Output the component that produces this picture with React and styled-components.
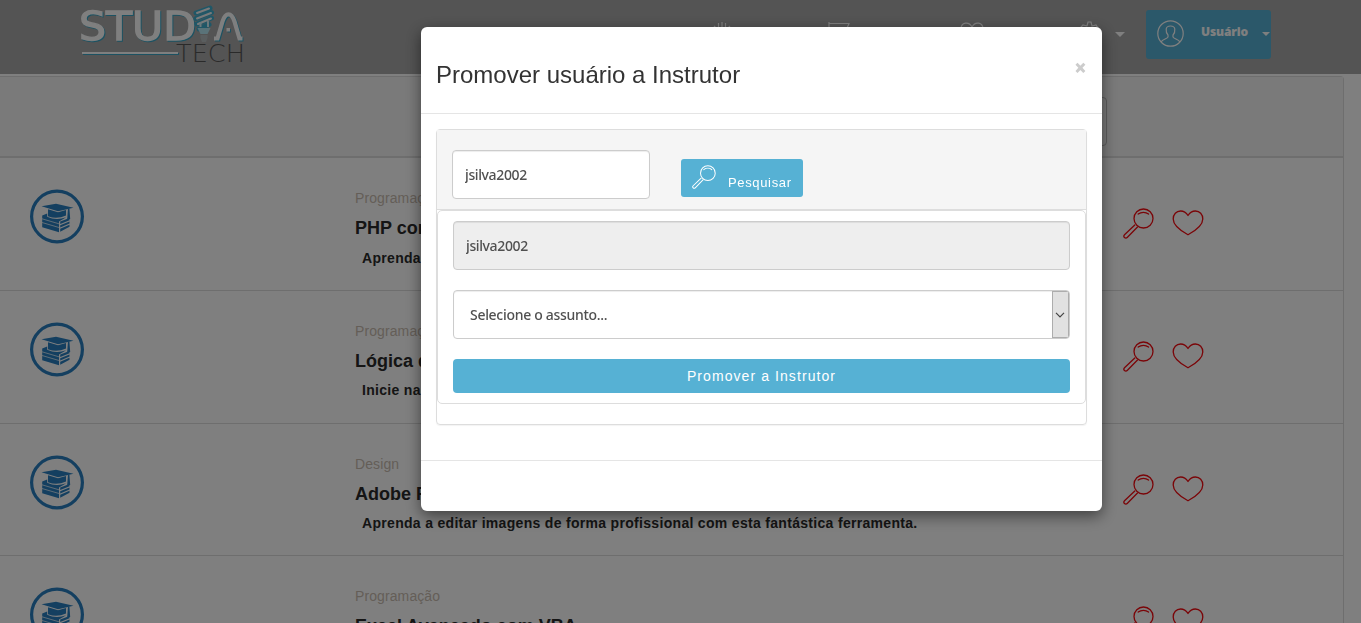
import React from "react";
import styled, { createGlobalStyle } from "styled-components";

const GlobalStyle = createGlobalStyle`
  *, *::before, *::after { box-sizing: border-box; }
  html, body { margin: 0; height: 100%; overflow: hidden; }
  body { background: #fff; color: #333; font: 14px/20px "Liberation Sans", sans-serif; }
  svg { display: block; }
  button, input { font-family: inherit; margin: 0; }
`;

const Page = styled.div`
  height: 100vh;
  overflow: hidden;
`;

const TopBar = styled.header`
  display: flex;
  height: 74px;
  padding: 0 90px 0 76px;
  background: #a8a8a8;
`;

const Brand = styled.a`
  width: 172px;
  height: 70px;
  flex: none;
`;

const Wordmark = styled.g`
  filter: drop-shadow(1.3px 1.8px 0 #38a5c5);
`;

const Nav = styled.nav`
  display: flex;
  flex: 1;
  justify-content: flex-end;
  align-items: flex-start;
`;

const NavItem = styled.a`
  display: flex;
  justify-content: center;
  width: ${(p) => p.$width}px;
  padding-top: 21px;
`;

const Caret = styled.div`
  width: 0;
  height: 0;
  flex: none;
  border: ${(p) => p.$size}px solid transparent;
  border-top-color: #fff;
  border-bottom: 0;
`;

const CaretSlot = styled.div`
  width: 10px;
  margin-right: 21px;
  padding-top: 32px;
`;

const UserButton = styled.button`
  display: flex;
  align-items: flex-start;
  width: 125px;
  height: 49px;
  margin-top: 10px;
  padding: 10px 1px 0 11px;
  border: 0;
  border-radius: 3px;
  background: #56b1d4;
  color: #fff;
`;

const UserName = styled.span`
  width: 61px;
  margin-left: 17px;
  padding-top: 2px;
  text-align: left;
  font: 800 12px/20px "Open Sans", sans-serif;
  letter-spacing: -0.15px;
`;

const UserCaret = styled.span`
  padding-top: 12px;
`;

const Catalog = styled.main`
  width: 1344px;
  margin-top: 2px;
  border: 1px solid #ddd;
  border-left: 0;
  border-radius: 0 4px 4px 0;
`;

const Filters = styled.div`
  display: flex;
  justify-content: flex-end;
  height: 81.2px;
  padding: 20px 236px 0 0;
  background: #f5f5f5;
  border-bottom: 2px solid #ddd;
`;

const FilterInput = styled.input`
  width: 360px;
  height: 49px;
  border: 1px solid #bbb;
  border-radius: 4px;
  background: #f5f5f5;
`;

const Course = styled.article`
  display: flex;
  height: 132.67px;
  border-bottom: 1px solid #ddd;
`;

const CourseBadge = styled.div`
  width: 355px;
  padding: 31px 0 0 29px;
`;

const CourseInfo = styled.div`
  width: 768px;
  padding-top: 30px;
`;

const Category = styled.div`
  color: #c9bcb0;
  letter-spacing: 0.1px;
`;

const CourseTitle = styled.h3`
  margin: 9px 0 8.6px;
  color: #2a2a2a;
  font-size: 18px;
  line-height: 22px;
`;

const Summary = styled.p`
  margin: 0;
  padding-left: 7px;
  color: #2a2a2a;
  font-weight: bold;
  letter-spacing: 0.31px;
`;

const Actions = styled.div`
  display: flex;
  gap: 18px;
  padding-top: 50.3px;
  color: #f50a10;
`;

const Backdrop = styled.div`
  position: fixed;
  inset: 0;
  background: rgba(0, 0, 0, 0.5);
`;

const Dialog = styled.section`
  position: fixed;
  top: 27px;
  left: 421px;
  width: 681px;
  height: 484px;
  background: #fff;
  border-radius: 6px;
  box-shadow: 0 5px 15px rgba(0, 0, 0, 0.5);
`;

const DialogHeader = styled.div`
  display: flex;
  justify-content: space-between;
  height: 87px;
  padding: 33px 15px 0;
  border-bottom: 1px solid #e5e5e5;
`;

const DialogTitle = styled.h2`
  margin: 0;
  font-size: 24px;
  line-height: 30px;
  font-weight: normal;
`;

const CloseButton = styled.button`
  height: 14px;
  padding: 0;
  border: 0;
  background: none;
  color: #ccc;
  font: 800 22px/11px "Open Sans", sans-serif;
`;

const DialogBody = styled.div`
  height: 347px;
  padding: 15px 15px 0;
  border-bottom: 1px solid #e5e5e5;
`;

const SearchPanel = styled.div`
  height: 296px;
  border: 1px solid #ddd;
  border-radius: 4px;
  box-shadow: 0 1px 1px rgba(0, 0, 0, 0.05);
`;

const SearchBar = styled.div`
  display: flex;
  gap: 31px;
  height: 80px;
  padding: 20px 15px 0;
  background: #f5f5f5;
  border-bottom: 1px solid #ddd;
`;

const ResultPanel = styled.div`
  display: flex;
  flex-direction: column;
  gap: 20px;
  height: 194px;
  padding: 10px 15px 0;
  border: 1px solid #ddd;
  border-radius: 5px;
`;

const Field = styled.input`
  width: ${(p) => p.$width || "100%"};
  height: 49px;
  flex: none;
  padding: 0 12px;
  border: 1px solid #ccc;
  border-radius: 4px;
  background: ${(p) => (p.readOnly ? "#eee" : "#fff")};
  box-shadow: inset 0 1px 1px rgba(0, 0, 0, 0.075);
  color: #505050;
  font: 500 14px "Noto Sans", sans-serif;
  letter-spacing: -0.38px;
  outline: 0;
`;

const SelectBox = styled.div`
  display: flex;
  justify-content: space-between;
  align-items: center;
  height: 49px;
  padding-left: 16px;
  overflow: hidden;
  border: 1px solid #ccc;
  border-radius: 4px;
  box-shadow: inset 0 1px 1px rgba(0, 0, 0, 0.075);
  color: #505050;
  font: 500 14px "Noto Sans", sans-serif;
  letter-spacing: -0.3px;
`;

const SelectArrow = styled.span`
  display: flex;
  align-items: center;
  justify-content: center;
  width: 17px;
  height: 47px;
  padding-right: 1px;
  border: 1px solid #adadad;
  background: #e1e1e1;
`;

const SearchButton = styled.button`
  display: flex;
  width: 122px;
  height: 38px;
  margin-top: 9px;
  padding: 6px 0 0 11px;
  border: 0;
  border-radius: 3px;
  background: #56b1d4;
  color: #fff;
`;

const SearchLabel = styled.span`
  margin-left: 12px;
  padding-top: 8px;
  font-size: 13px;
  line-height: 20px;
  letter-spacing: 0.65px;
`;

const PromoteButton = styled.button`
  height: 34px;
  padding: 0;
  border: 0;
  border-radius: 4px;
  background: #56b1d4;
  color: #fff;
  font-size: 14px;
  letter-spacing: 1.08px;
`;

const Logo = () => (
  <svg width="172" height="70" viewBox="76 0 172 70" fill="none">
    <Wordmark fill="#fff" stroke="#fff" strokeWidth="1.3" fontFamily="DejaVu Sans, sans-serif" fontSize="39">
      <text x="79" y="40" textLength="117" lengthAdjust="spacingAndGlyphs">STUD</text>
      <path d="M214 38.500h3.500l5-17c3-9.500 9-9.500 12 0l5 17h3" fill="none" strokeWidth="4.200" />
      <rect x="226.500" y="28" width="3.500" height="3.500" stroke="none" />
      <path d="M82 53H178" strokeWidth="2" />
    </Wordmark>
    <path d="M196 13l14-5M196 18.500l15.500-6M197 24l14.500-6M199 29l10-4.500" stroke="#3faecf" strokeWidth="5" strokeLinecap="round" />
    <path d="M197 13l12-4.500M197 18.500l14-5.500M198 24l13-5.500" stroke="#f4f4f4" strokeWidth="2" strokeLinecap="round" />
    <path d="M200.500 22v5M208 21v6" stroke="#d5f2fa" strokeWidth="2" />
    <path d="M197.500 28h13l-3 6h-7z" fill="#b5e6f3" />
    <path d="M200.500 35h7v3l-1.500 4h-4l-1.500-4z" fill="#b4bcbf" />
    <text x="176" y="61.500" textLength="69" lengthAdjust="spacingAndGlyphs" fill="#555"
      fontFamily="DejaVu Sans, sans-serif" fontWeight="200" fontSize="24">TECH</text>
  </svg>
);

const Magnifier = ({ size = 31 }) => (
  <svg width={size} height={size} viewBox="0 0 31 31" fill="none" stroke="currentColor" strokeWidth="1.300" strokeLinecap="round">
    <circle cx="20.500" cy="10.500" r="9.500" />
    <path d="M11.800 17L1.500 26.800a1.900 1.900 0 0 0 2.700 2.700L14.500 19M15.200 6c3-2.300 7.500-2.300 10.300 0" />
  </svg>
);

const Heart = () => (
  <svg width="32" height="31" viewBox="0 0 32 31" fill="none" stroke="currentColor" strokeWidth="1.300" strokeLinejoin="round">
    <path d="M16 7.500C14 4.300 11.500 3 8.600 3 4.300 3 1.200 6.500 1.200 11c0 6.500 7.500 11.800 14.800 15.800C23.300 22.800 30.800 17.500 30.800 11c0-4.500-3.100-8-7.400-8-2.900 0-5.400 1.300-7.400 4.500z" />
  </svg>
);

const CourseIcon = () => (
  <svg width="56" height="56" viewBox="0 0 56 56">
    <circle cx="28" cy="27.500" r="25.400" fill="none" stroke="#287fc0" strokeWidth="3.200" />
    <g fill="#287fc0">
      <path d="M12.500 17.300L27 14.800 44.500 18.800 29 22.200z" />
      <path d="M19 20.200l10 3 8-2.200v5.500q-9 4.200-18 .8zM39 19.500h1.400l.8 10.500h-3z" />
      <path d="M13.200 26.500l5-2v3.300q9 4.300 19 .5L30 32.500v10.800l-16.800-5z" />
      <path d="M31.200 32.500l9.300-3.500v2.200l-9.300 3.800zM31.200 36.300l9.300-3.800v2l-9.300 4zM31.200 39.800l9.300-4v2l-9.300 5z" />
    </g>
    <path d="M13 29.800l17 5M13 33.500l17 5" stroke="#fff" strokeWidth="0.700" />
  </svg>
);

const UserIcon = () => (
  <svg width="27" height="27" viewBox="0 0 27 27" fill="none" stroke="#fff" strokeWidth="1.200">
    <circle cx="13.500" cy="13.500" r="12.700" />
    <path d="M4 22c1.500-3 7-3.500 7-5v-2c-2-2-2-4-1.800-6 .5-4 8.100-4 8.600 0 .2 2 .2 4-1.800 6v2c0 1.500 5.500 2 7 5" />
  </svg>
);

const navIcons = [
  { width: 150, path: "M5 5l2 2M9.500 2v4M13 1v5M16.500 2v4M21 5l-2 2M4 12h18" },
  { width: 84, path: "M3 1v20M3 2.500h20l-3 7H4" },
  { width: 182, path: "M13 6C10 0 2 1 2 8c0 6 11 13 11 13s11-7 11-13c0-7-8-8-11-2z" },
  { width: 52, path: "M11 5l1-4h3l1 4 4-1 2 3-2 4M11 5L7 4 4 7l2 4" },
];

const courses = [
  { category: "Programação", title: "PHP com MySQL", text: "Aprenda a criar sites" },
  { category: "Programação", title: "Lógica de Programação", text: "Inicie na programação" },
  { category: "Design", title: "Adobe Photoshop", text: "Aprenda a editar imagens de forma profissional com esta fantástica ferramenta." },
  { category: "Programação", title: "Excel Avançado com VBA", text: "" },
];

export default function App() {
  return (
    <Page>
      <GlobalStyle />
      <TopBar>
        <Brand><Logo /></Brand>
        <Nav>
          {navIcons.map((icon) => (
            <NavItem key={icon.path} $width={icon.width}>
              <svg width="26" height="24" viewBox="0 0 26 24" fill="none" stroke="#fff" strokeWidth="1.200"><path d={icon.path} /></svg>
            </NavItem>
          ))}
          <CaretSlot><Caret $size={5} /></CaretSlot>
          <UserButton>
            <UserIcon />
            <UserName>Usuário</UserName>
            <UserCaret><Caret $size={4} /></UserCaret>
          </UserButton>
        </Nav>
      </TopBar>
      <Catalog>
        <Filters><FilterInput readOnly /></Filters>
        {courses.map((course) => (
          <Course key={course.title}>
            <CourseBadge><CourseIcon /></CourseBadge>
            <CourseInfo>
              <Category>{course.category}</Category>
              <CourseTitle>{course.title}</CourseTitle>
              <Summary>{course.text}</Summary>
            </CourseInfo>
            <Actions><Magnifier /><Heart /></Actions>
          </Course>
        ))}
      </Catalog>
      <Backdrop />
      <Dialog>
        <DialogHeader>
          <DialogTitle>Promover usuário a Instrutor</DialogTitle>
          <CloseButton>×</CloseButton>
        </DialogHeader>
        <DialogBody>
          <SearchPanel>
            <SearchBar>
              <Field $width="198px" defaultValue="jsilva2002" />
              <SearchButton><Magnifier size={24} /><SearchLabel>Pesquisar</SearchLabel></SearchButton>
            </SearchBar>
            <ResultPanel>
              <Field readOnly value="jsilva2002" />
              <SelectBox>
                Selecione o assunto...
                <SelectArrow>
                  <svg width="10" height="6" viewBox="0 0 10 6" fill="none" stroke="#444" strokeWidth="1.200"><path d="M1 .8l4 4 4-4" /></svg>
                </SelectArrow>
              </SelectBox>
              <PromoteButton>Promover a Instrutor</PromoteButton>
            </ResultPanel>
          </SearchPanel>
        </DialogBody>
      </Dialog>
    </Page>
  );
}
